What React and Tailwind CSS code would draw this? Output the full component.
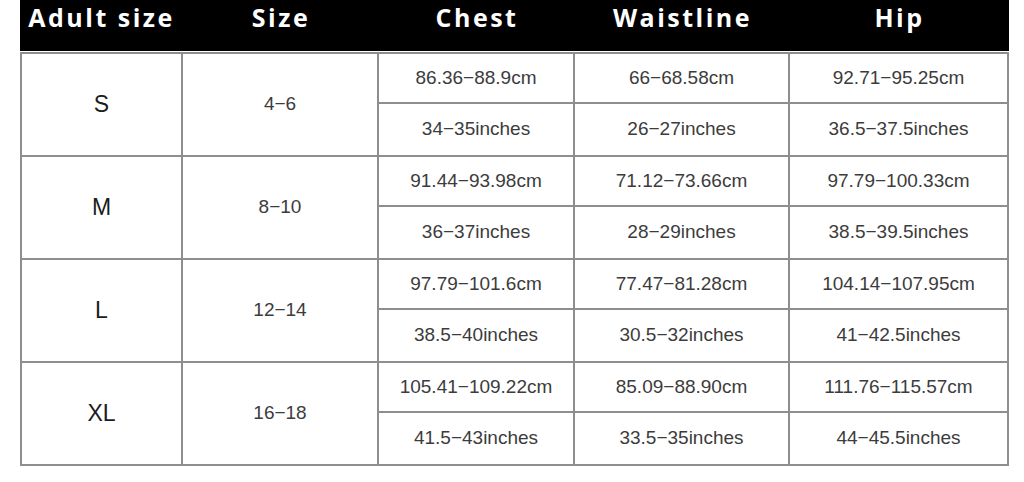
import React from "react";

const rows = [
  {
    size: "S",
    num: "4−6",
    cm: ["86.36−88.9cm", "66−68.58cm", "92.71−95.25cm"],
    inch: ["34−35inches", "26−27inches", "36.5−37.5inches"],
  },
  {
    size: "M",
    num: "8−10",
    cm: ["91.44−93.98cm", "71.12−73.66cm", "97.79−100.33cm"],
    inch: ["36−37inches", "28−29inches", "38.5−39.5inches"],
  },
  {
    size: "L",
    num: "12−14",
    cm: ["97.79−101.6cm", "77.47−81.28cm", "104.14−107.95cm"],
    inch: ["38.5−40inches", "30.5−32inches", "41−42.5inches"],
  },
  {
    size: "XL",
    num: "16−18",
    cm: ["105.41−109.22cm", "85.09−88.90cm", "111.76−115.57cm"],
    inch: ["41.5−43inches", "33.5−35inches", "44−45.5inches"],
  },
];

const headers = [
  { t: "Adult size", w: "w-[163px]" },
  { t: "Size", w: "w-[196px]" },
  { t: "Chest", w: "w-[196px]" },
  { t: "Waistline", w: "w-[215px]" },
  { t: "Hip", w: "w-[219px]" },
];

const subW = ["w-[196px]", "w-[215px]", "w-[219px]"];

function SubRow({ items, h }) {
  return (
    <div className={`flex ${h}`}>
      {items.map((v, i) => (
        <div
          key={i}
          className={`${subW[i]} flex items-center justify-center border-r-2 border-b-2 border-[#8e8e8e] text-[19px] text-[#3c3c3c]`}
        >
          {v}
        </div>
      ))}
    </div>
  );
}

export default function App() {
  return (
    <div
      className="w-[1024px] h-[482px] bg-white overflow-hidden"
      style={{ fontFamily: '"Liberation Sans", Arial, sans-serif' }}
    >
      <div className="ml-[20px] w-[989px]">
        <div className="flex h-[51px] bg-black">
          {headers.map((h) => (
            <div
              key={h.t}
              className={`${h.w} flex justify-center text-white font-bold text-[25px] leading-[35px] tracking-[2.5px]`}
              style={{ fontFamily: '"Open Sans", "DejaVu Sans", sans-serif' }}
            >
              {h.t}
            </div>
          ))}
        </div>
        <div className="mt-px border-l-2 border-t-2 border-[#8e8e8e]">
          {rows.map((r) => (
            <div key={r.size} className="flex h-[103px]">
              <div className="w-[161px] flex items-center justify-center border-r-2 border-b-2 border-[#8e8e8e] text-[23px] text-[#1c1c1c]">
                {r.size}
              </div>
              <div className="w-[196px] flex items-center justify-center border-r-2 border-b-2 border-[#8e8e8e] text-[19px] text-[#3c3c3c]">
                {r.num}
              </div>
              <div className="flex flex-col">
                <SubRow items={r.cm} h="h-[50px]" />
                <SubRow items={r.inch} h="h-[53px]" />
              </div>
            </div>
          ))}
        </div>
      </div>
    </div>
  );
}
